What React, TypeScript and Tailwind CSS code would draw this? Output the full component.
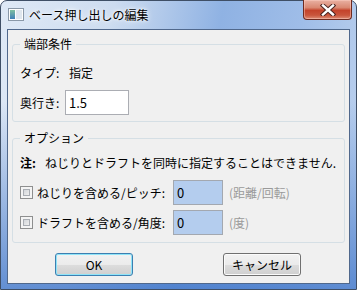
import React from "react";

const font = "font-['Noto_Sans_CJK_JP','Noto_Sans',sans-serif]";

function AppIcon() {
  return (
    <svg width="16" height="13" viewBox="0 0 16 13">
      <defs>
        <linearGradient id="ai" x1="0" y1="0" x2="0" y2="1">
          <stop offset="0" stopColor="#7fc0a0" />
          <stop offset="1" stopColor="#3f7fb8" />
        </linearGradient>
      </defs>
      <rect x="0.5" y="0.5" width="15" height="12" fill="#fdfdfd" stroke="#8a98a8" />
      <rect x="2" y="2" width="5" height="9" fill="url(#ai)" />
      <rect x="8" y="2" width="6" height="9" fill="#dfe6ee" />
    </svg>
  );
}

function CloseButton() {
  return (
    <div className="-mt-px ml-auto flex h-[20px] w-[49px] items-center justify-center rounded-b-[4px] border border-t-0 border-[#6e2a20] bg-[linear-gradient(to_bottom,#e9b1a3_0%,#d98872_40%,#c4432b_55%,#c9553c_80%,#dd8d76_100%)] shadow-[inset_0_0_0_1px_rgba(255,210,200,0.45)]">
      <svg width="16" height="12" viewBox="0 0 16 12">
        <path
          d="M3 1.5 L13 10.5 M13 1.5 L3 10.5"
          stroke="#4a2420"
          strokeWidth="4.4"
          strokeLinecap="square"
        />
        <path
          d="M3 1.5 L13 10.5 M13 1.5 L3 10.5"
          stroke="#ffffff"
          strokeWidth="2.4"
          strokeLinecap="square"
        />
      </svg>
    </div>
  );
}

function Checkbox() {
  return (
    <span className="h-[13px] w-[13px] shrink-0 border border-[#8e8f8f] bg-[#f4f4f4] p-[2px]">
      <span className="block h-full w-full border border-[#a9adb3] bg-[linear-gradient(135deg,#d3d6da,#eeeeee)]" />
    </span>
  );
}

function Button({ label, primary }: { label: string; primary?: boolean }) {
  return (
    <button
      className={
        "h-[23px] w-[78px] rounded-[3px] border text-[12px] leading-none text-black bg-[linear-gradient(to_bottom,#f2f2f2_0%,#ebebeb_50%,#dddddd_50%,#cfcfcf_100%)] " +
        (primary
          ? "border-[#3c7fb1] shadow-[inset_0_0_0_1px_#8fe4f8]"
          : "border-[#707070] shadow-[inset_0_0_0_1px_#fbfbfb]")
      }
    >
      {label}
    </button>
  );
}

export default function App() {
  return (
    <div
      className={`${font} flex h-[290px] w-[357px] flex-col rounded-t-[7px] border border-[#3f4f66] bg-[linear-gradient(to_bottom,rgba(255,255,255,0)_0%,rgba(255,255,255,0)_35%,rgba(60,115,200,0.75)_100%),linear-gradient(100deg,#dfe9f6_0%,#cddcf0_28%,#8fb2e3_55%,#9fbde8_75%,#c2d5ef_100%)] text-[12px] text-black`}
    >
      {/* title bar */}
      <div className="flex h-[28px] shrink-0 items-start pl-[7px] pr-[4px]">
        <div className="mt-[7px]">
          <AppIcon />
        </div>
        <span className="ml-[5px] mt-[6px] leading-[16px] [text-shadow:0_0_6px_#ffffff,0_0_3px_#ffffff]">
          ベース押し出しの編集
        </span>
        <CloseButton />
      </div>

      {/* client area */}
      <div className="flex flex-1 px-[6px] pb-[5px]">
        <div className="flex flex-1 flex-col border border-[#50688c] bg-[#f0f0f0]">
          <fieldset className="mx-[4px] mt-[6px] rounded-[3px] border border-[#d5dfe5] pb-[6px] pl-[7px] pr-[7px] pt-[8px]">
            <legend className="px-[4px] leading-[16px]">端部条件</legend>
            <div className="flex flex-col gap-[5px]">
              <div className="flex h-[25px] items-center">
                <span className="w-[49px]">タイプ:</span>
                <span>指定</span>
              </div>
              <div className="flex h-[25px] items-center">
                <span className="w-[45px]">奥行き:</span>
                <div className="flex h-[25px] w-[64px] items-center border border-[#abadb3] bg-white pl-[3px] text-[13px]">
                  1.5
                </div>
              </div>
            </div>
          </fieldset>

          <fieldset className="mx-[4px] mt-[8px] rounded-[3px] border border-[#d5dfe5] pb-[7px] pl-[7px] pr-[7px] pt-[7px]">
            <legend className="px-[4px] leading-[16px]">オプション</legend>
            <div className="flex h-[20px] items-center whitespace-nowrap">
              <span className="w-[25px] font-bold">注:</span>
              <span>ねじりとドラフトを同時に指定することはできません.</span>
            </div>
            <div className="mt-[7px] flex flex-col gap-[5px]">
              {[
                { label: "ねじりを含める/ピッチ:", unit: "(距離/回転)" },
                { label: "ドラフトを含める/角度:", unit: "(度)" },
              ].map((r) => (
                <div key={r.label} className="flex h-[25px] items-center">
                  <Checkbox />
                  <span className="ml-[4px] w-[136px] whitespace-nowrap">{r.label}</span>
                  <div className="flex h-[25px] w-[50px] items-center border border-[#a3a8b0] bg-[#b4cdee] pl-[3px] text-[13px]">
                    0
                  </div>
                  <span className="ml-[6px] text-[#9a9a9a]">{r.unit}</span>
                </div>
              ))}
            </div>
          </fieldset>

          <div className="mt-[10px] flex pl-[47px]">
            <Button label="OK" primary />
            <div className="ml-[90px]">
              <Button label="キャンセル" />
            </div>
          </div>
        </div>
      </div>
    </div>
  );
}
